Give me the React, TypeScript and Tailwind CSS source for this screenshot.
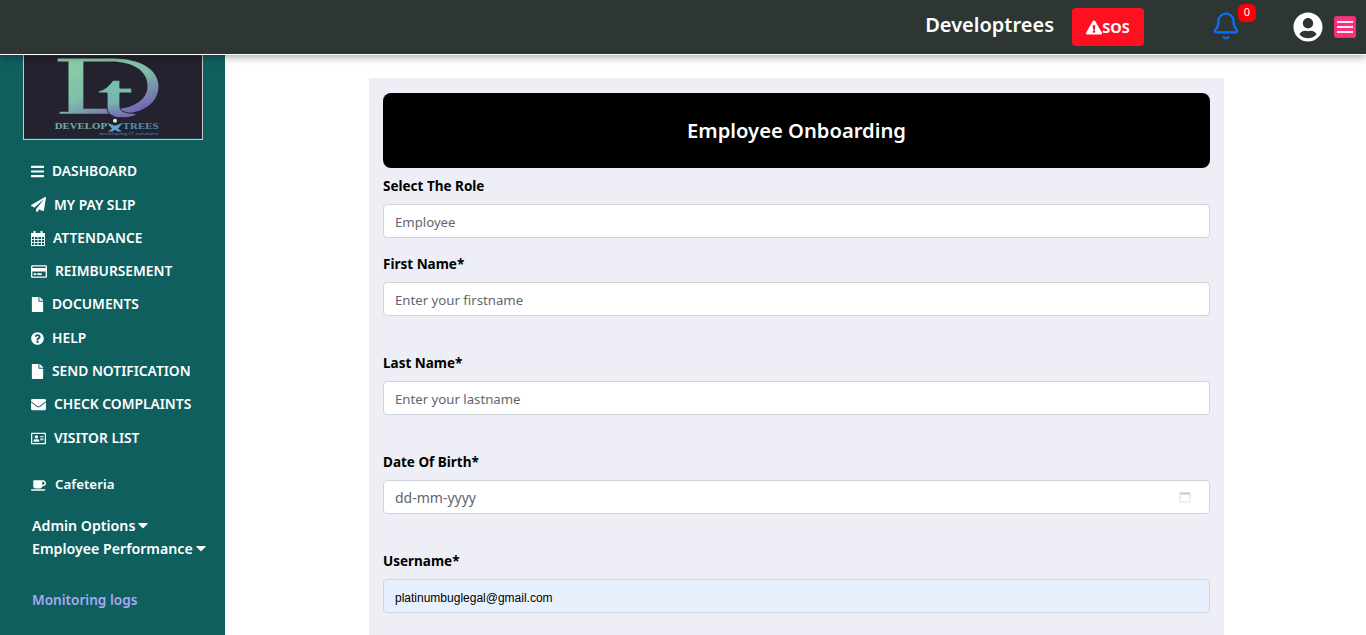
import type { ComponentType } from "react";
import { Bell } from "lucide-react";
import {
	FaBars,
	FaCaretDown,
	FaCoffee,
	FaEnvelope,
	FaExclamationTriangle,
	FaFile,
	FaPaperPlane,
	FaQuestionCircle,
	FaRegAddressCard,
	FaRegCreditCard,
	FaUserCircle,
} from "react-icons/fa";

interface IconProps {
	className?: string;
}

interface NavItem {
	label: string;
	icon: ComponentType<IconProps>;
	iconClass: string;
	gap: string;
}

const GridCalendar = ({ className }: IconProps) => (
	<svg viewBox="0 0 14 15" className={className} fill="none" stroke="currentColor">
		<rect x="0.5" y="2.5" width="13" height="12" />
		<path d="M0 5.5H14M0 8.5H14M0 11.5H14M3.5 5V15M7 5V15M10.5 5V15" strokeWidth="0.9" />
		<path d="M3.5 0V3.5M10.5 0V3.5" strokeWidth="2" />
		<rect x="0.5" y="2.5" width="13" height="2.5" fill="currentColor" />
	</svg>
);

const navItems: readonly NavItem[] = [
	{ label: "DASHBOARD", icon: FaBars, iconClass: "w-[13px] h-[15px]", gap: "gap-[8px]" },
	{ label: "MY PAY SLIP", icon: FaPaperPlane, iconClass: "w-[15px] h-[15px]", gap: "gap-[8px]" },
	{ label: "ATTENDANCE", icon: GridCalendar, iconClass: "w-[14px] h-[15px]", gap: "gap-[8px]" },
	{ label: "REIMBURSEMENT", icon: FaRegCreditCard, iconClass: "w-[16px] h-[15px]", gap: "gap-[8px]" },
	{ label: "DOCUMENTS", icon: FaFile, iconClass: "w-[13px] h-[15px]", gap: "gap-[8px]" },
	{ label: "HELP", icon: FaQuestionCircle, iconClass: "w-[13px] h-[13px]", gap: "gap-[8px]" },
	{ label: "SEND NOTIFICATION", icon: FaFile, iconClass: "w-[13px] h-[15px]", gap: "gap-[8px]" },
	{ label: "CHECK COMPLAINTS", icon: FaEnvelope, iconClass: "w-[15px] h-[15px]", gap: "gap-[8px]" },
	{ label: "VISITOR LIST", icon: FaRegAddressCard, iconClass: "w-[15px] h-[15px]", gap: "gap-[8px]" },
];

const Logo = () => (
	<svg viewBox="0 0 180 84" className="block w-full h-full" role="img" aria-label="Developtrees logo">
		<defs>
			<linearGradient id="dtGrad" x1="0.15" y1="0.1" x2="0.8" y2="0.95">
				<stop offset="0" stopColor="#8acda8" />
				<stop offset="0.5" stopColor="#7fbfa9" />
				<stop offset="1" stopColor="#7464b4" />
			</linearGradient>
			<linearGradient id="tGrad" x1="0.5" y1="0" x2="0.5" y2="1">
				<stop offset="0" stopColor="#7cc0ad" />
				<stop offset="0.6" stopColor="#78b4b0" />
				<stop offset="1" stopColor="#7464b4" />
			</linearGradient>
		</defs>
		<rect width="180" height="84" fill="#25222f" />
		<path
			fillRule="evenodd"
			d="M34 3H90C117 3 136 14 136 31C136 47 122 59 98 59H36V57H45V6H34ZM60 6V54H97C114 52 125 43 125 31C125 15 110 6 88 6Z"
			fill="url(#dtGrad)"
		/>
		<path
			d="M90 25H97V33H109V38H97V52C97 57 102 58 114 59C112 62 106 63 98 63C90 63 84 59 84 53V38H75V36C81 35 86 31 90 25Z"
			fill="url(#tGrad)"
			stroke="#25222f"
			strokeWidth="1"
		/>
		<text
			x="31"
			y="74"
			textLength={53}
			lengthAdjust="spacingAndGlyphs"
			fontFamily="'Liberation Serif', serif"
			fontSize="7.6"
			fontWeight="700"
			fill="#6fb0a8"
		>
			DEVELOP
		</text>
		<text
			x="100"
			y="74"
			textLength={36}
			lengthAdjust="spacingAndGlyphs"
			fontFamily="'Liberation Serif', serif"
			fontSize="7.6"
			fontWeight="700"
			fill="#4f8fb8"
		>
			TREES
		</text>
		<circle cx="92" cy="66" r="2" fill="#d5eef0" />
		<path d="M84 68L92 71L100 68L95 74L99 77H95L92 75L89 77H85L89 74Z" fill="#5aa9d0" />
		<text
			x="76"
			y="80.5"
			textLength={60}
			lengthAdjust="spacingAndGlyphs"
			fontFamily="'Liberation Sans', sans-serif"
			fontSize="3"
			fill="#4f7fa8"
		>
			developing IT solutions
		</text>
	</svg>
);

const Sidebar = () => (
	<aside className="w-[225px] shrink-0 bg-[#0f5f5f] text-white flex flex-col h-[580px] overflow-hidden">
		<div className="ml-[23px] w-[180px] h-[85px] border-x border-b border-[#c9c9c9]">
			<Logo />
		</div>
		<nav className="pl-[31px] mt-[15px] flex flex-col">
			{navItems.map((item) => {
				const Icon = item.icon;
				return (
					<a
						key={item.label}
						href="#"
						className={`flex items-center h-[33.3px] text-[13.8px] font-semibold whitespace-nowrap ${item.gap}`}
					>
						<Icon className={`${item.iconClass} shrink-0`} />
						{item.label}
					</a>
				);
			})}
		</nav>
		<a href="#" className="pl-[31px] mt-[14px] flex items-center gap-[9px] h-[33px] text-[13.3px] font-semibold">
			<FaCoffee className="w-[15px] h-[15px]" />
			Cafeteria
		</a>
		<div className="pl-[32px] mt-[12px] text-[14.2px] font-semibold leading-[23px]">
			<div className="flex items-center gap-[3px]">
				Admin Options <FaCaretDown className="w-[10px] h-[16px]" />
			</div>
			<div className="flex items-center gap-[3px]">
				Employee Performance <FaCaretDown className="w-[10px] h-[16px]" />
			</div>
		</div>
		<a href="#" className="pl-[32px] mt-[29px] text-[13.6px] font-semibold leading-[21px] text-[#a8a8f5]">
			Monitoring logs
		</a>
	</aside>
);

const Header = () => (
	<header className="relative z-10 h-[55px] bg-[#2e3634] border-b border-white shadow-[0_2px_8px_rgba(0,0,0,0.35)] flex items-center">
		<div className="ml-auto flex items-center">
			<span className="text-[20px] font-semibold text-white leading-[28px] mb-[5px]">Developtrees</span>
			<button
				type="button"
				className="ml-[18px] w-[72px] h-[38px] bg-[#ff0f20] rounded-[4px] text-white flex items-center justify-center text-[14.5px] font-bold"
			>
				<FaExclamationTriangle className="w-[16px] h-[15px]" />
				<span className="leading-none">SOS</span>
			</button>
			<div className="relative ml-[67px] w-[30px] h-[30px] -mt-[2px]">
				<Bell className="w-[30px] h-[30px] text-[#0d6efd]" strokeWidth={1.8} />
				<span className="absolute left-[27px] -top-[7px] w-[18px] h-[18px] bg-[#f00] rounded-[6px] text-white text-[11px] leading-[16px] text-center">
					0
				</span>
			</div>
			<FaUserCircle className="ml-[52px] w-[30px] h-[30px] text-white" />
			<button
				type="button"
				className="ml-[11px] mr-[10px] w-[22px] h-[22px] bg-[#ff2d7e] border border-[#d8357a] rounded-[2px] flex flex-col justify-center gap-[3px] px-[2px]"
				aria-label="Menu"
			>
				<span className="block h-[2px] bg-white/90" />
				<span className="block h-[2px] bg-white/90" />
				<span className="block h-[2px] bg-white/90" />
			</button>
		</div>
	</header>
);

interface FieldProps {
	label: string;
	placeholder?: string;
	className?: string;
}

const Field = ({ label, placeholder, className = "" }: FieldProps) => (
	<div className={className}>
		<label className="block text-[13.5px] font-bold text-black leading-[21px]">{label}</label>
		<input
			readOnly
			placeholder={placeholder}
			className="mt-[7px] block w-full h-[34px] px-[11px] pt-[2px] bg-white border border-[#ced4da] rounded-[4px] text-[13.2px] placeholder:text-[#5f666d] outline-none"
		/>
	</div>
);

const OnboardingForm = () => (
	<section className="ml-[144px] mt-[23px] w-[855px] bg-[#eeeef6] px-[14px] pt-[15px] pb-[22px]">
		<div className="h-[75px] bg-black rounded-[8px] flex items-center justify-center text-white text-[20.2px] font-semibold">
			Employee Onboarding
		</div>
		<Field label="Select The Role" placeholder="Employee" className="mt-[8px]" />
		<Field label="First Name*" placeholder="Enter your firstname" className="mt-[16px]" />
		<Field label="Last Name*" placeholder="Enter your lastname" className="mt-[37px]" />
		<div className="mt-[37px]">
			<label className="block text-[13.5px] font-bold text-black leading-[21px]">Date Of Birth*</label>
			<div className="mt-[7px] h-[34px] px-[11px] bg-white border border-[#ced4da] rounded-[4px] flex items-center justify-between text-[14px] text-[#5f666d]">
				dd-mm-yyyy
				<svg viewBox="0 0 12 12" className="w-[12px] h-[12px] mr-[7px]" fill="none">
					<rect x="1" y="2" width="10" height="9" stroke="#dddddd" />
					<rect x="1" y="1.5" width="10" height="2" fill="#cccccc" />
				</svg>
			</div>
		</div>
		<div className="mt-[37px]">
			<label className="block text-[13.5px] font-bold text-black leading-[21px]">Username*</label>
			<div className="mt-[7px] h-[34px] px-[11px] pt-[3px] bg-[#e8f0fe] border border-[#ced4da] rounded-[4px] flex items-center text-[12px] text-black font-['Liberation_Sans',sans-serif]">
				platinumbuglegal@gmail.com
			</div>
		</div>
	</section>
);

const App = () => (
	<div className="w-[1366px] h-[635px] overflow-hidden bg-white font-['Noto_Sans',sans-serif]">
		<Header />
		<div className="flex">
			<Sidebar />
			<OnboardingForm />
		</div>
	</div>
);

export default App;
